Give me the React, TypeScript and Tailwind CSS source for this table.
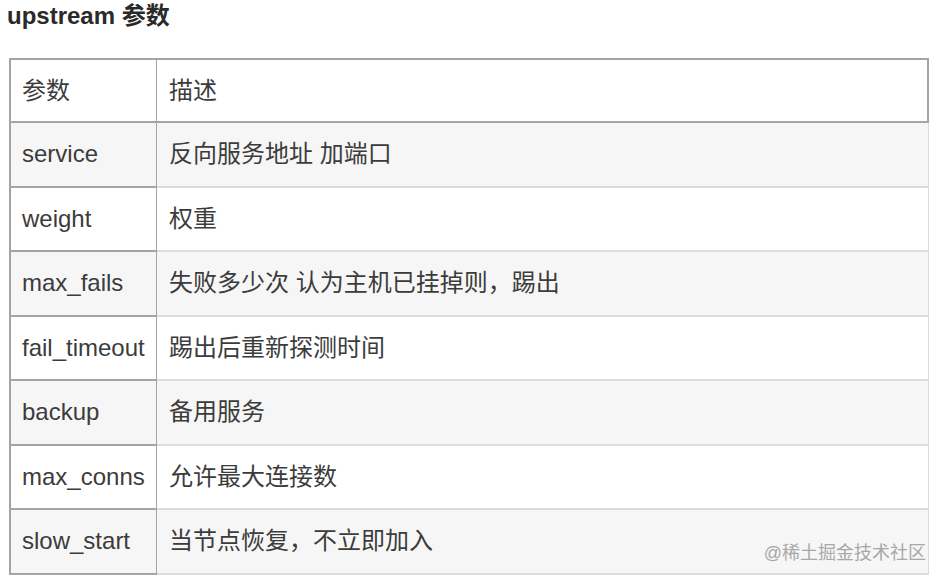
import React from "react";

const rows: [string, string][] = [
  ["service", "反向服务地址 加端口"],
  ["weight", "权重"],
  ["max_fails", "失败多少次 认为主机已挂掉则，踢出"],
  ["fail_timeout", "踢出后重新探测时间"],
  ["backup", "备用服务"],
  ["max_conns", "允许最大连接数"],
  ["slow_start", "当节点恢复，不立即加入"],
];

const font = { fontFamily: '"Liberation Sans", Arial, "Noto Sans CJK SC", sans-serif' };

export default function App() {
  return (
    <div className="relative w-[945px] h-[583px] bg-white text-[#3c3c3c] overflow-hidden" style={font}>
      <h3 className="pl-[7px] pt-[2px] h-[58px] text-[24px] leading-[28px] font-bold text-[#2a2a2a]">
        upstream 参数
      </h3>
      <div className="ml-[9px] w-[920px] flex flex-col">
        <div className="flex h-[65px] text-[24px]">
          <div className="w-[148px] flex items-center pl-[11px] border-t-2 border-l-2 border-r-[1.5px] border-b-2 border-[#a4a4a4]">
            参数
          </div>
          <div className="flex-1 flex items-center pl-[12px] border-t-2 border-r-2 border-b-2 border-[#a4a4a4]">
            描述
          </div>
        </div>
        {rows.map(([k, v], i) => (
          <div key={k} className={`flex h-[64.5px] text-[24px] ${i % 2 === 0 ? "bg-[#f6f6f6]" : "bg-white"}`}>
            <div className="w-[148px] flex items-center pl-[11px] border-l-2 border-r-[1.5px] border-b-2 border-[#a4a4a4]">
              {k}
            </div>
            <div className="flex-1 flex items-center pl-[12px] border-r border-b-2 border-[#dcdcdc]">
              {v}
            </div>
          </div>
        ))}
      </div>
      <div className="absolute right-[19px] bottom-[20px] text-[18px] leading-[20px] text-[#a8a8a8]">
        @稀土掘金技术社区
      </div>
    </div>
  );
}
